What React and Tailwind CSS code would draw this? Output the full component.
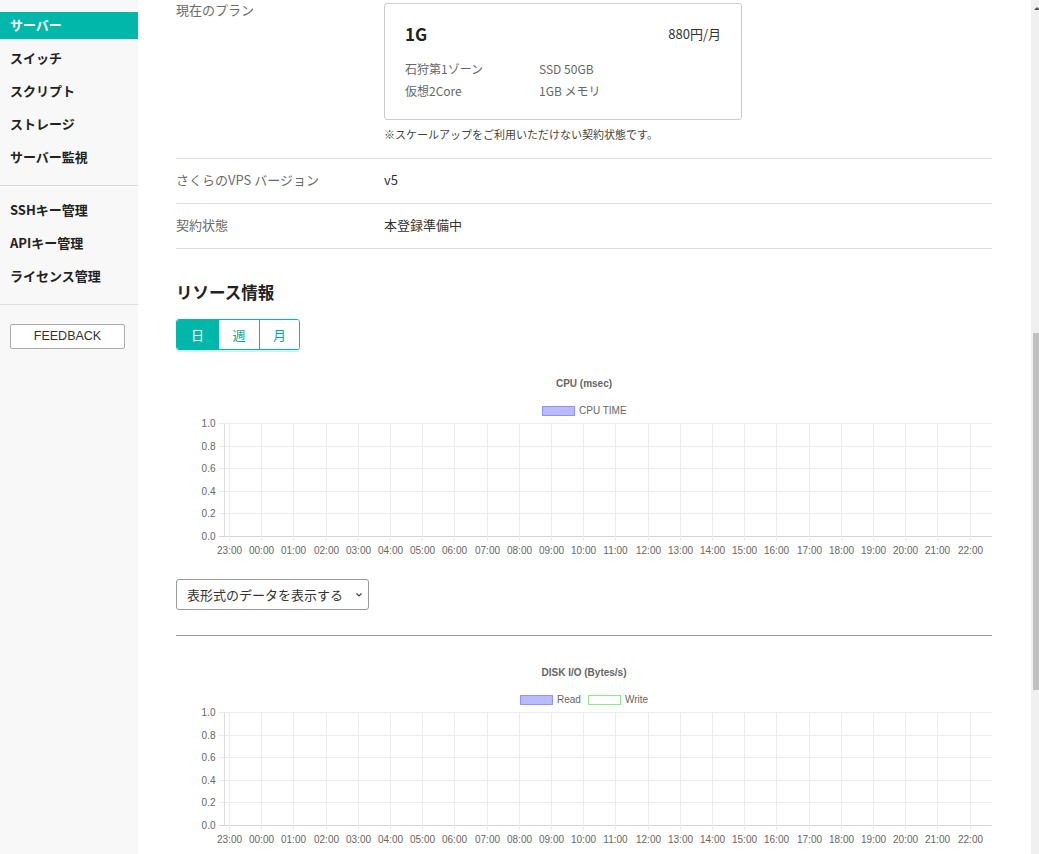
import React from 'react';

const navTop = ['サーバー', 'スイッチ', 'スクリプト', 'ストレージ', 'サーバー監視'];
const navBottom = ['SSHキー管理', 'APIキー管理', 'ライセンス管理'];

const hours = [
  '23:00', '00:00', '01:00', '02:00', '03:00', '04:00', '05:00', '06:00',
  '07:00', '08:00', '09:00', '10:00', '11:00', '12:00', '13:00', '14:00',
  '15:00', '16:00', '17:00', '18:00', '19:00', '20:00', '21:00', '22:00',
];
const yLabels = ['1.0', '0.8', '0.6', '0.4', '0.2', '0.0'];

function Chart({ title, legend }) {
  const gy = (i) => Math.round(53 + i * 22.5) + 0.5;
  const gx = (i) => Math.round(53 + i * 32.2) + 0.5;

  return (
    <svg width="816" height="190" className="block font-['Liberation_Sans',Arial,sans-serif]">
      <text x="408" y="16.5" textAnchor="middle" fontSize="10" fontWeight="700" fill="#666">
        {title}
      </text>
      {legend.map((l) => (
        <g key={l.label}>
          <rect x={l.x + 0.5} y="36.5" width="32" height="9" fill={l.fill} stroke={l.stroke} />
          <text x={l.x + 37} y="44" fontSize="10" fill="#666">{l.label}</text>
        </g>
      ))}
      {yLabels.map((t, i) => (
        <g key={t}>
          <line x1="43" x2="816" y1={gy(i)} y2={gy(i)} stroke={i === 5 ? '#d4d4d4' : '#ececec'} />
          <text x="39.5" y={gy(i) + 3.5} textAnchor="end" fontSize="10" fill="#666">{t}</text>
        </g>
      ))}
      <line x1="48.5" x2="48.5" y1={gy(0)} y2={gy(5)} stroke="#dcdcdc" />
      {hours.map((h, i) => (
        <g key={h}>
          <line x1={gx(i)} x2={gx(i)} y1={gy(0)} y2={gy(5) + 5} stroke="#ececec" />
          <text x={gx(i)} y="184" textAnchor="middle" fontSize="10" fill="#666">{h}</text>
        </g>
      ))}
    </svg>
  );
}

export default function App() {
  return (
    <div className="flex h-[854px] overflow-hidden bg-white font-['Noto_Sans_CJK_JP','Noto_Sans',sans-serif] text-[#333]">
      {/* sidebar */}
      <aside className="w-[138px] shrink-0 bg-[#f8f8f8]">
        <nav className="flex flex-col gap-[6px] pt-[12px]">
          {navTop.map((n, i) => (
            <a
              key={n}
              className={`flex h-[27px] items-center px-[10px] pb-[2px] text-[13px] font-bold ${i === 0 ? 'bg-[#00b7a9] text-white' : 'text-[#222]'}`}
            >
              {n}
            </a>
          ))}
        </nav>
        <div className="mt-[14px] border-t border-[#dcdcdc]" />
        <nav className="flex flex-col gap-[6px] pt-[11px]">
          {navBottom.map((n) => (
            <a key={n} className="flex h-[27px] items-center px-[10px] pb-[2px] text-[13px] font-bold text-[#222]">
              {n}
            </a>
          ))}
        </nav>
        <div className="mt-[14px] border-t border-[#dcdcdc]" />
        <div className="px-[10px] pt-[19px]">
          <button className="flex h-[25px] w-[115px] items-center justify-center rounded-[2px] border border-[#aaa] bg-white font-['Liberation_Sans',Arial,sans-serif] text-[12.5px] text-[#333]">
            FEEDBACK
          </button>
        </div>
      </aside>

      {/* main */}
      <main className="flex-1 pl-[38px] pr-[39px]">
        <div className="w-[816px]">
          <div className="flex items-start border-b border-[#ddd] pb-[15px]">
            <div className="w-[208px] shrink-0 text-[13px] leading-[20px] text-[#6b6b6b]">現在のプラン</div>
            <div className="pt-[3px]">
              <div className="h-[117px] w-[358px] rounded-[3px] border border-[#ccc] px-[20px] pt-[18px]">
                <div className="flex h-[24px] items-center justify-between">
                  <span className="text-[17px] font-bold text-[#222]">1G</span>
                  <span className="text-[13px] text-[#333]">880円/月</span>
                </div>
                <div className="mt-[12px] grid grid-cols-[134px_1fr] text-[12px] leading-[22px] text-[#666]">
                  <span>石狩第1ゾーン</span>
                  <span>SSD 50GB</span>
                  <span>仮想2Core</span>
                  <span>1GB メモリ</span>
                </div>
              </div>
              <p className="mt-[5px] text-[11px] leading-[18px] text-[#444]">
                ※スケールアップをご利用いただけない契約状態です。
              </p>
            </div>
          </div>

          <div className="flex border-b border-[#ddd] pt-[11px] pb-[13px] text-[13px] leading-[20px]">
            <div className="w-[208px] shrink-0 text-[#6b6b6b]">さくらのVPS バージョン</div>
            <div className="text-[#333]">v5</div>
          </div>
          <div className="flex border-b border-[#ddd] pt-[11px] pb-[13px] text-[13px] leading-[20px]">
            <div className="w-[208px] shrink-0 text-[#6b6b6b]">契約状態</div>
            <div className="text-[#333]">本登録準備中</div>
          </div>

          <h2 className="mt-[31px] text-[16.5px] font-bold leading-[24px] text-[#222]">リソース情報</h2>

          <div className="mt-[15px] flex h-[31px] w-fit overflow-hidden rounded-[3px] border border-[#00b7a9] text-[13px] shadow-[0_2px_0_#d3f1ee]">
            <button className="w-[41px] bg-[#00b7a9] text-white">日</button>
            <button className="w-[41px] border-l border-[#00b7a9] bg-white text-[#00a99c]">週</button>
            <button className="w-[40px] border-l border-[#00b7a9] bg-white text-[#00a99c]">月</button>
          </div>

          <div className="mt-[20px]">
            <Chart
              title="CPU (msec)"
              legend={[{ label: 'CPU TIME', x: 366, fill: 'rgba(0,0,255,0.27)', stroke: 'rgba(80,80,255,0.55)' }]}
            />
          </div>

          <button className="mt-[19px] flex h-[31px] w-[193px] items-center gap-[12px] rounded-[3px] border border-[#999] bg-white pl-[10px] text-[13px] text-[#333]">
            <span>表形式のデータを表示する</span>
            <svg width="8" height="6" viewBox="0 0 8 6">
              <path d="M1.5 1.5L4 4l2.5-2.5" fill="none" stroke="#444" strokeWidth="1.2" />
            </svg>
          </button>

          <div className="mt-[25px] border-t border-[#999]" />

          <div className="mt-[23px]">
            <Chart
              title="DISK I/O (Bytes/s)"
              legend={[
                { label: 'Read', x: 344, fill: 'rgba(0,0,255,0.27)', stroke: 'rgba(80,80,255,0.55)' },
                { label: 'Write', x: 412, fill: '#ffffff', stroke: '#8fe88f' },
              ]}
            />
          </div>
        </div>
      </main>

      {/* scrollbar */}
      <div className="flex w-[8px] shrink-0 flex-col bg-[#f0f0f0]">
        <svg width="8" height="10" className="mt-[3px]">
          <path d="M3 7l3-3 3 3z" fill="#505050" />
        </svg>
        <div className="ml-[2px] mt-[320px] h-[357px] w-[6px] bg-[#c1c1c1]" />
      </div>
    </div>
  );
}
